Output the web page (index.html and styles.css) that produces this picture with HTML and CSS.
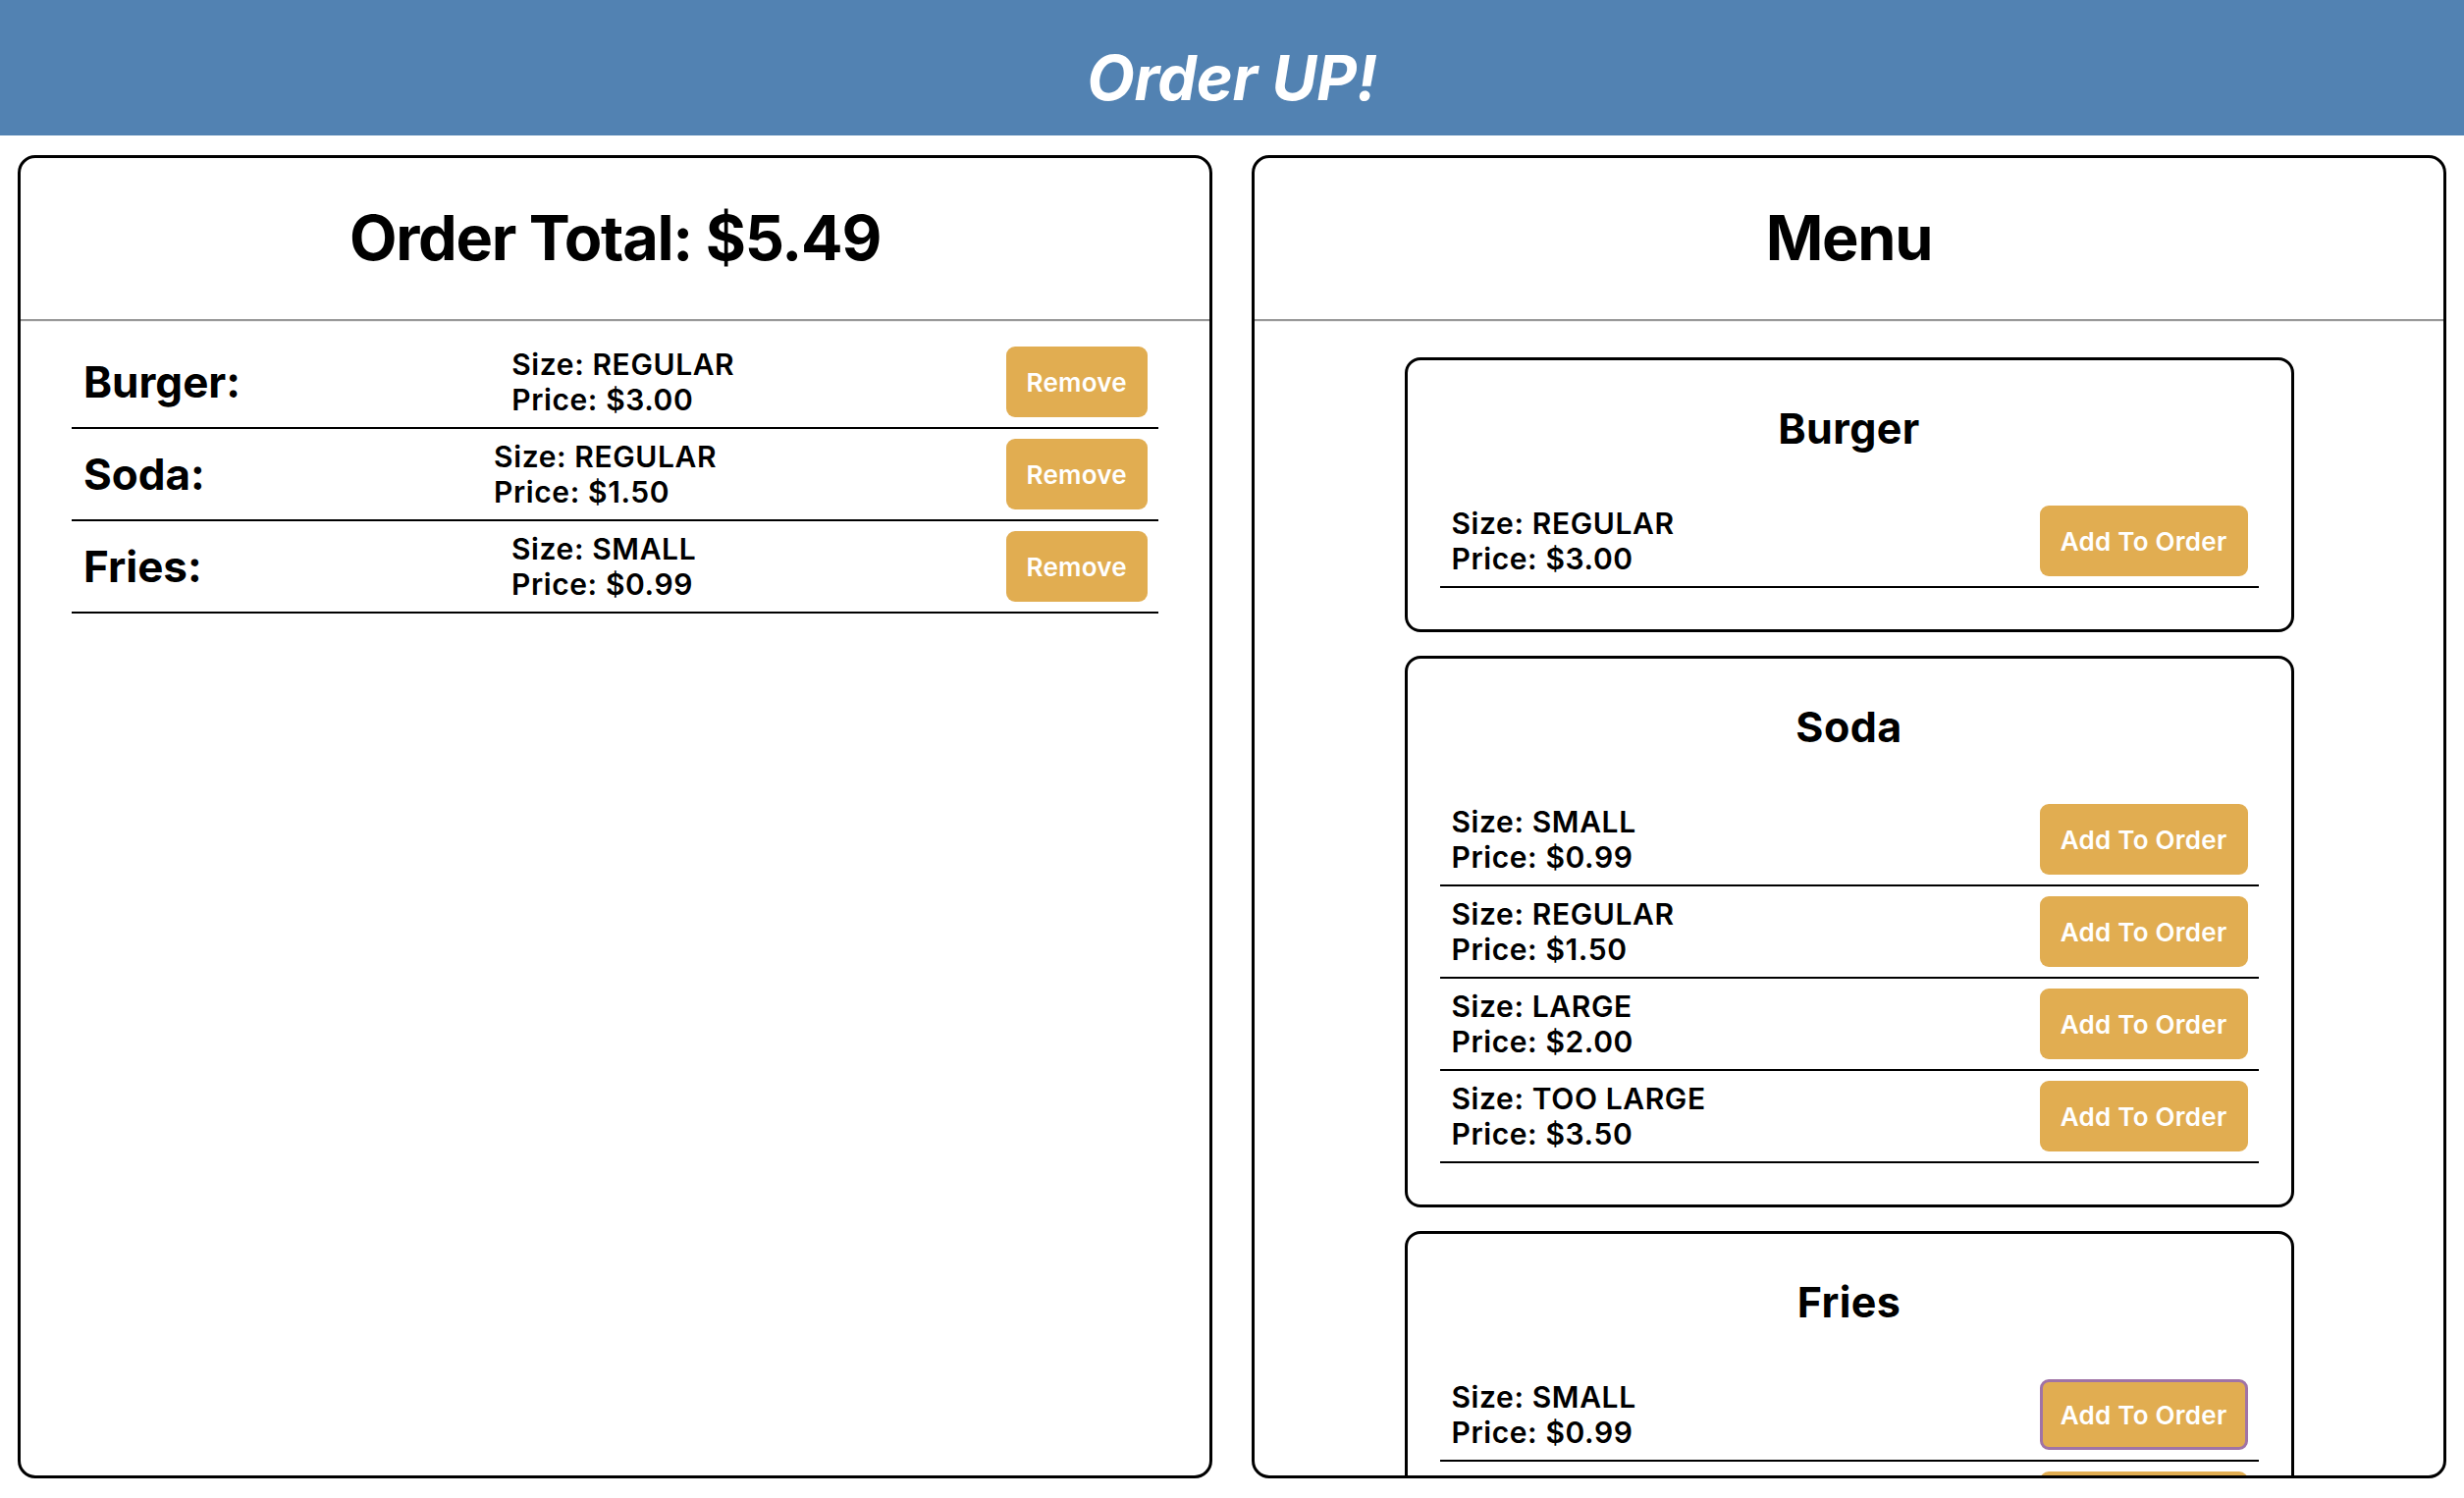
FILE: index.html
```html
<!DOCTYPE html>
<html lang="en">
<head>
<meta charset="utf-8">
<title>Order UP!</title>
<link rel="stylesheet" href="styles.css">
</head>
<body>
<header class="topbar">
  <h1 class="brand">Order UP!</h1>
</header>
<main class="layout">
  <section class="panel">
    <div class="panel-head"><h2 class="panel-title">Order Total: $5.49</h2></div>
    <ul class="order-list">
      <li class="row order-row">
        <span class="order-name">Burger:</span>
        <div class="info"><div>Size: REGULAR</div><div>Price: $3.00</div></div>
        <button class="btn">Remove</button>
      </li>
      <li class="row order-row">
        <span class="order-name">Soda:</span>
        <div class="info"><div>Size: REGULAR</div><div>Price: $1.50</div></div>
        <button class="btn">Remove</button>
      </li>
      <li class="row order-row">
        <span class="order-name">Fries:</span>
        <div class="info"><div>Size: SMALL</div><div>Price: $0.99</div></div>
        <button class="btn">Remove</button>
      </li>
    </ul>
  </section>
  <section class="panel">
    <div class="panel-head"><h2 class="panel-title">Menu</h2></div>
    <div class="menu">
      <article class="card">
        <h3 class="card-title">Burger</h3>
        <ul class="opts">
          <li class="row"><div class="info"><div>Size: REGULAR</div><div>Price: $3.00</div></div><button class="btn">Add To Order</button></li>
        </ul>
      </article>
      <article class="card">
        <h3 class="card-title">Soda</h3>
        <ul class="opts">
          <li class="row"><div class="info"><div>Size: SMALL</div><div>Price: $0.99</div></div><button class="btn">Add To Order</button></li>
          <li class="row"><div class="info"><div>Size: REGULAR</div><div>Price: $1.50</div></div><button class="btn">Add To Order</button></li>
          <li class="row"><div class="info"><div>Size: LARGE</div><div>Price: $2.00</div></div><button class="btn">Add To Order</button></li>
          <li class="row"><div class="info"><div>Size: TOO LARGE</div><div>Price: $3.50</div></div><button class="btn">Add To Order</button></li>
        </ul>
      </article>
      <article class="card">
        <h3 class="card-title">Fries</h3>
        <ul class="opts">
          <li class="row"><div class="info"><div>Size: SMALL</div><div>Price: $0.99</div></div><button class="btn btn-focus">Add To Order</button></li>
          <li class="row"><div class="info"><div>Size: REGULAR</div><div>Price: $1.49</div></div><button class="btn">Add To Order</button></li>
        </ul>
      </article>
    </div>
  </section>
</main>
</body>
</html>
```
FILE: styles.css
```css
* { box-sizing: border-box; }
html, body { margin: 0; padding: 0; }
body {
  font-family: Inter, "Noto Sans", "Liberation Sans", sans-serif;
  color: #000;
  background: #fff;
  height: 100vh;
  overflow: hidden;
}
.topbar {
  height: 138px;
  background: #5282b2;
  display: flex;
  align-items: center;
  justify-content: center;
}
.brand {
  margin: 0;
  color: #fff;
  font-size: 63px;
  font-weight: 700;
  font-style: italic;
  letter-spacing: -0.005em;
  line-height: 1;
  padding-top: 20px;
}
.layout {
  height: calc(100vh - 138px);
  padding: 20px 18px;
  display: grid;
  grid-template-columns: 1fr 1fr;
  gap: 40px;
}
.panel {
  border: 3px solid #000;
  border-radius: 18px;
  overflow: hidden;
  height: 100%;
}
.panel-head {
  height: 166px;
  display: flex;
  align-items: center;
  justify-content: center;
  border-bottom: 2px solid #9a9a9a;
  box-shadow: 0 1px 0 #ececec;
}
.panel-title {
  margin: 0;
  font-size: 63px;
  font-weight: 700;
  letter-spacing: -0.02em;
  line-height: 1.2;
}
.order-list {
  list-style: none;
  margin: 16px 52px 0;
  padding: 0;
}
.row {
  display: flex;
  align-items: center;
  justify-content: space-between;
  padding: 10px 11px 10px 12px;
  border-bottom: 2px solid #000;
}
.order-name {
  font-size: 44px;
  font-weight: 700;
  letter-spacing: 0;
}
.info {
  font-size: 30px;
  font-weight: 600;
  line-height: 36px;
  letter-spacing: 0.02em;
}
.btn {
  height: 72px;
  padding: 0 21px;
  border: none;
  border-radius: 9px;
  background: #e1ad51;
  color: #fff;
  font-family: Inter, "Noto Sans", "Liberation Sans", sans-serif;
  font-size: 26px;
  font-weight: 600;
  letter-spacing: 0.01em;
  cursor: pointer;
}
.btn-focus {
  border: 3px solid #a073a6;
  padding: 0 18px;
}
.menu {
  padding-top: 37px;
  display: flex;
  flex-direction: column;
  align-items: center;
  gap: 24px;
}
.card {
  width: 906px;
  border: 3px solid #000;
  border-radius: 16px;
  padding-bottom: 42px;
  flex-shrink: 0;
}
.card-title {
  margin: 43px 0;
  text-align: center;
  font-size: 43px;
  font-weight: 700;
  line-height: 52px;
  letter-spacing: 0.01em;
}
.opts {
  list-style: none;
  margin: 0 33px;
  padding: 0;
}
```
